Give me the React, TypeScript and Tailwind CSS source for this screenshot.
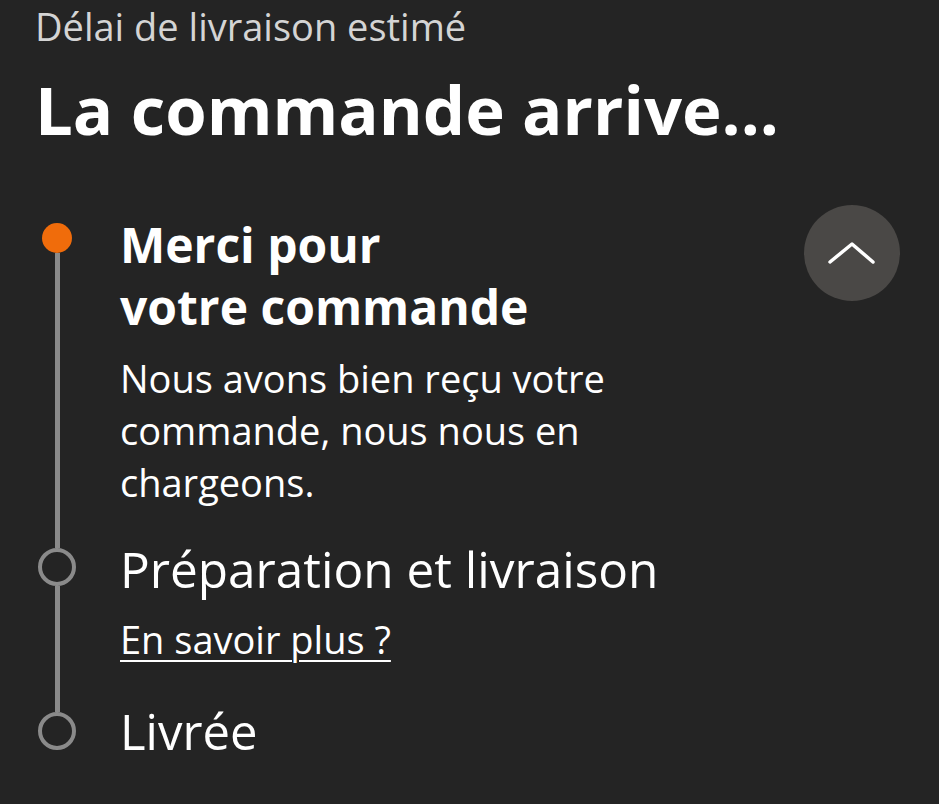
export default function App() {
  const font = { fontFamily: "'Open Sans', sans-serif" };
  return (
    <div
      className="min-h-[804px] w-[939px] bg-[#242424] pl-[35px] pr-[39px] pt-[4px] text-white"
      style={font}
    >
      <p className="text-[38px] leading-[44px] text-[#d4d4d4]">Délai de livraison estimé</p>
      <h1 className="mt-[21px] text-[67px] font-bold leading-[80px]">La commande arrive...</h1>

      <div className="mt-[65px]">
        {/* step 1 */}
        <div className="flex">
          <div className="flex w-[44px] flex-col items-center">
            <div className="h-[9px]" />
            <div className="h-[30px] w-[30px] rounded-full bg-[#f06c0b]" />
            <div className="w-[5px] flex-1 bg-[#8a8a8a]" />
          </div>
          <div className="ml-[41px] flex-1">
            <h2 className="text-[48px] font-bold leading-[62px]">
              Merci pour
              <br />
              votre commande
            </h2>
            <p className="mt-[14px] text-[38px] leading-[52px]">
              Nous avons bien reçu votre
              <br />
              commande, nous nous en
              <br />
              chargeons.
            </p>
          </div>
          <button className="-mt-[9px] flex h-[96px] w-[96px] items-center justify-center rounded-full bg-[#4a4846]">
            <svg width="96" height="96" viewBox="0 0 96 96" fill="none">
              <path d="M26 57 L48 39 L69 57" stroke="white" strokeWidth="3.5" strokeLinecap="round" strokeLinejoin="round" />
            </svg>
          </button>
        </div>

        {/* step 2 */}
        <div className="flex">
          <div className="flex w-[44px] flex-col items-center">
            <div className="h-[40px] w-[5px] bg-[#8a8a8a]" />
            <div className="h-[38px] w-[38px] rounded-full border-[4px] border-[#8a8a8a]" />
            <div className="w-[5px] flex-1 bg-[#8a8a8a]" />
          </div>
          <div className="ml-[41px] flex-1 pt-[31px]">
            <p className="text-[49.5px] leading-[60px]">Préparation et livraison</p>
            <a className="mt-[16px] block text-[38px] leading-[48px] underline decoration-2 underline-offset-[6px]">
              En savoir plus ?
            </a>
          </div>
        </div>

        {/* step 3 */}
        <div className="flex">
          <div className="flex w-[44px] flex-col items-center">
            <div className="h-[49px] w-[5px] bg-[#8a8a8a]" />
            <div className="h-[38px] w-[38px] rounded-full border-[4px] border-[#8a8a8a]" />
          </div>
          <div className="ml-[41px] flex-1 pt-[38px]">
            <p className="text-[49px] leading-[60px]">Livrée</p>
          </div>
        </div>
      </div>
    </div>
  );
}
